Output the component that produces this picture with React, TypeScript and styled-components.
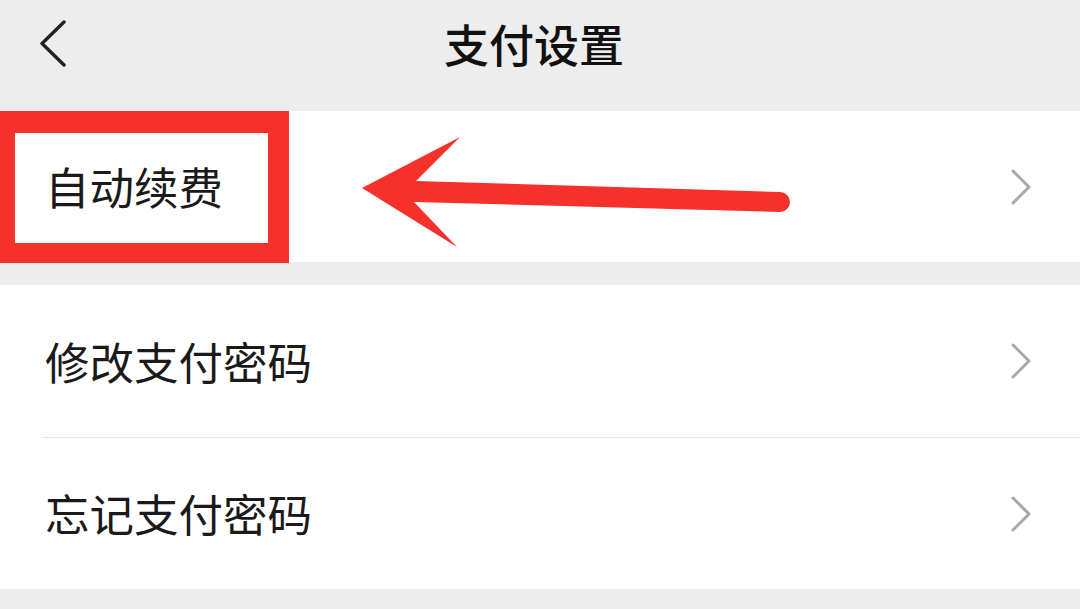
import React from "react";
import styled, { createGlobalStyle } from "styled-components";

const GlobalStyle = createGlobalStyle`
  html, body {
    margin: 0;
    padding: 0;
    background: #ededed;
    font-family: "Noto Sans CJK SC", "Noto Sans", sans-serif;
  }
`;

const Page = styled.div`
  width: 1080px;
  height: 609px;
  overflow: hidden;
  background: #ededed;
`;

const Header = styled.header`
  height: 111px;
`;

const NavBar = styled.div`
  height: 87px;
  display: grid;
  grid-template-columns: 120px 1fr 120px;
  align-items: center;
`;

const BackButton = styled.div`
  display: flex;
  align-items: center;
  padding-left: 38px;
`;

const Title = styled.h1`
  margin: 0;
  text-align: center;
  font-size: 45px;
  font-weight: 500;
  color: #111;
  line-height: 1;
  padding-right: 12px;
`;

const Group = styled.section`
  background: #fff;
  & + & {
    margin-top: 23px;
  }
`;

const Row = styled.div<{ $h: number }>`
  position: relative;
  height: ${(p) => p.$h}px;
  display: flex;
  align-items: center;
  justify-content: space-between;
  padding: 0 46px 0 45px;
`;

const Label = styled.span`
  font-size: 44.5px;
  color: #1a1a1a;
  line-height: 1;
  position: relative;
  z-index: 1;
`;

const Divider = styled.div`
  height: 1px;
  margin-left: 42px;
  background: #e6e6e6;
`;

/* red annotation drawn over the first row */
const HighlightBox = styled.div`
  position: absolute;
  left: 0;
  top: 0;
  width: 289px;
  height: 152px;
  box-sizing: border-box;
  border-style: solid;
  border-color: #f6302a;
  border-width: 22px 21px 20px 15px;
`;

const ArrowMark = styled.svg`
  position: absolute;
  left: 355px;
  top: 19px;
`;

const Chevron = () => (
  <svg width="26" height="38" viewBox="0 0 26 38">
    <polyline
      points="5,3 21,19 5,35"
      fill="none"
      stroke="#a8a8a8"
      strokeWidth="3"
      strokeLinecap="round"
      strokeLinejoin="round"
    />
  </svg>
);

const BackIcon = () => (
  <svg width="30" height="48" viewBox="0 0 30 48">
    <polyline
      points="26,2 4,23.5 26,45"
      fill="none"
      stroke="#222"
      strokeWidth="3.4"
      strokeLinecap="round"
      strokeLinejoin="round"
    />
  </svg>
);

export default function App() {
  return (
    <>
      <GlobalStyle />
      <Page>
        <Header>
          <NavBar>
            <BackButton>
              <BackIcon />
            </BackButton>
            <Title>支付设置</Title>
            <div />
          </NavBar>
        </Header>

        <Group>
          <Row $h={151}>
            <HighlightBox />
            <Label>自动续费</Label>
            <Chevron />
            <ArrowMark width="450" height="130" viewBox="355 130 450 130">
              <path
                d="M362 188 L460 137 L416 181 L780 192 A10 10 0 0 1 780 212 L414 202 L457 247 Z"
                fill="#f6302a"
              />
            </ArrowMark>
          </Row>
        </Group>

        <Group>
          <Row $h={152}>
            <Label>修改支付密码</Label>
            <Chevron />
          </Row>
          <Divider />
          <Row $h={151}>
            <Label>忘记支付密码</Label>
            <Chevron />
          </Row>
        </Group>
      </Page>
    </>
  );
}
